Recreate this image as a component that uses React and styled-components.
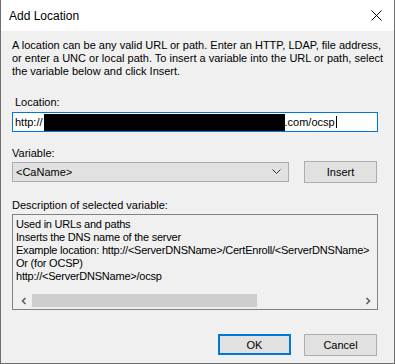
import styled, { createGlobalStyle } from "styled-components";

const Global = createGlobalStyle`
  html, body { margin: 0; padding: 0; background: #ffffff; }
  body { font-family: "Liberation Sans", Arial, sans-serif; }
`;

const Window = styled.div`
  width: 395px;
  height: 364px;
  box-sizing: border-box;
  border: 1px solid #6e6e6e;
  border-top: none;
  background: #f0f0f0;
  display: flex;
  flex-direction: column;
  overflow: hidden;
`;

const TitleBar = styled.div`
  height: 31px;
  flex: none;
  background: #ffffff;
  display: flex;
  align-items: center;
  justify-content: space-between;
  padding: 0 12px 0 8px;
`;

const Title = styled.div`
  font-size: 12px;
  color: #000;
  padding-top: 1px;
`;

const Body = styled.div`
  flex: 1;
  display: flex;
  flex-direction: column;
  padding: 8px 16px 0 11px;
  font-size: 11px;
  color: #000;
`;

const Intro = styled.p`
  margin: 0;
  line-height: 13px;
  white-space: nowrap;
`;

const Label = styled.div`
  line-height: 13px;
  margin-top: ${(p) => p.$top}px;
  padding-left: ${(p) => p.$indent || 0}px;
`;

const TextBox = styled.div`
  margin-top: 3px;
  height: 20px;
  box-sizing: border-box;
  border: 1px solid #0078d7;
  background: #fff;
  display: flex;
  align-items: center;
  padding-left: 2px;
  white-space: nowrap;
`;

const Redacted = styled.span`
  display: inline-block;
  width: 241px;
  height: 17px;
  background: #000;
  margin-left: 1px;
`;

const Caret = styled.span`
  display: inline-block;
  width: 1px;
  height: 12px;
  background: #000;
  margin-left: 1px;
`;

const Row = styled.div`
  display: flex;
  align-items: center;
  margin-top: 1px;
  gap: 15px;
`;

const Select = styled.div`
  width: 277px;
  height: 20px;
  box-sizing: border-box;
  border: 1px solid #adadad;
  background: #e1e1e1;
  display: flex;
  align-items: center;
  justify-content: space-between;
  padding: 0 7px 0 3px;
`;

const Button = styled.div`
  width: 73px;
  height: ${(p) => (p.$primary ? 21 : 22)}px;
  box-sizing: border-box;
  border: ${(p) => (p.$primary ? "2px solid #0078d7" : "1px solid #adadad")};
  background: #e1e1e1;
  display: flex;
  align-items: center;
  justify-content: center;
  font-size: 11px;
`;

const DescBox = styled.div`
  margin-top: 2px;
  height: 96px;
  box-sizing: border-box;
  border: 1px solid #828282;
  background: #f0f0f0;
  display: flex;
  flex-direction: column;
  justify-content: space-between;
  padding: 3px 1px 2px 2px;
  overflow: hidden;
`;

const DescText = styled.div`
  line-height: 13px;
  white-space: nowrap;
  padding-left: 1px;
  letter-spacing: -0.22px;
`;

const HScroll = styled.div`
  height: 13px;
  display: flex;
  align-items: center;
`;

const Arrow = styled.div`
  width: 17px;
  height: 13px;
  display: flex;
  align-items: center;
  justify-content: center;
  flex: none;
`;

const Track = styled.div`
  flex: 1;
  height: 13px;
  display: flex;
`;

const Thumb = styled.div`
  width: 225px;
  height: 13px;
  background: #cdcdcd;
`;

const Footer = styled.div`
  display: flex;
  justify-content: flex-end;
  gap: 13px;
  margin-top: 24px;
  padding-right: 1px;
`;

const Chevron = ({ dir }) => (
  <svg width="8" height="8" viewBox="0 0 8 8">
    <path
      d={dir === "left" ? "M5.5 1 L2.5 4 L5.5 7" : "M2.5 1 L5.5 4 L2.5 7"}
      stroke="#606060"
      strokeWidth="1.6"
      fill="none"
    />
  </svg>
);

export default function App() {
  return (
    <>
      <Global />
      <Window>
        <TitleBar>
          <Title>Add Location</Title>
          <svg width="11" height="11" viewBox="0 0 11 11">
            <path d="M0.5 0.5 L10.5 10.5 M10.5 0.5 L0.5 10.5" stroke="#000" strokeWidth="1" />
          </svg>
        </TitleBar>
        <Body>
          <Intro>
            A location can be any valid URL or path. Enter an HTTP, LDAP, file address,
            <br />
            or enter a UNC or local path. To insert a variable into the URL or path, select
            <br />
            the variable below and click Insert.
          </Intro>
          <Label $top={18} $indent={3}>Location:</Label>
          <TextBox>
            http://
            <Redacted />
            .com/ocsp
            <Caret />
          </TextBox>
          <Label $top={15}>Variable:</Label>
          <Row>
            <Select>
              <span>&lt;CaName&gt;</span>
              <svg width="9" height="6" viewBox="0 0 9 6">
                <path d="M0.5 0.5 L4.5 4.5 L8.5 0.5" stroke="#333" strokeWidth="1" fill="none" />
              </svg>
            </Select>
            <Button>Insert</Button>
          </Row>
          <Label $top={16}>Description of selected variable:</Label>
          <DescBox>
            <DescText>
              Used in URLs and paths
              <br />
              Inserts the DNS name of the server
              <br />
              Example location: http://&lt;ServerDNSName&gt;/CertEnroll/&lt;ServerDNSName&gt;
              <br />
              Or (for OCSP)
              <br />
              http://&lt;ServerDNSName&gt;/ocsp
            </DescText>
            <HScroll>
              <Arrow>
                <Chevron dir="left" />
              </Arrow>
              <Track>
                <Thumb />
              </Track>
              <Arrow>
                <Chevron dir="right" />
              </Arrow>
            </HScroll>
          </DescBox>
          <Footer>
            <Button $primary>OK</Button>
            <Button>Cancel</Button>
          </Footer>
        </Body>
      </Window>
    </>
  );
}
